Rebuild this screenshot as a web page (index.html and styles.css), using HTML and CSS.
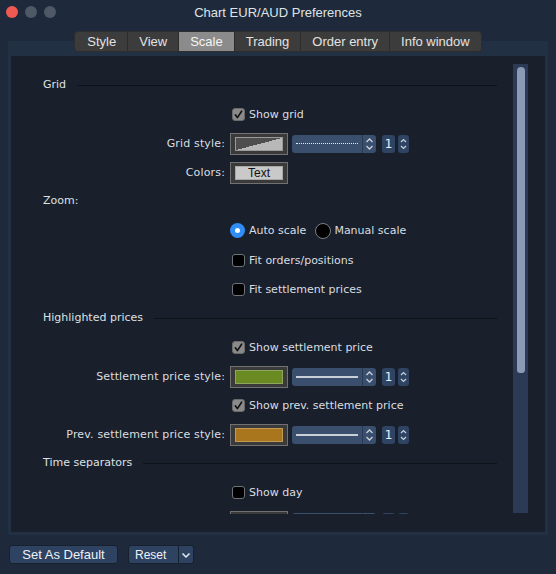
FILE: index.html
```html
<!DOCTYPE html>
<html>
<head>
<meta charset="utf-8">
<link rel="stylesheet" href="styles.css">
</head>
<body>
<div class="window">
  <div class="titlebar">
    <div class="lights">
      <span class="light red"></span><span class="light grey"></span><span class="light grey"></span>
    </div>
    <div class="title">Chart EUR/AUD Preferences</div>
    <div></div>
  </div>
  <div class="tabs-wrap">
    <div class="tabs">
      <div class="tab">Style</div>
      <div class="tab">View</div>
      <div class="tab active">Scale</div>
      <div class="tab">Trading</div>
      <div class="tab">Order entry</div>
      <div class="tab">Info window</div>
    </div>
  </div>
  <div class="panel">
    <div class="inner">
      <div class="scroll">
        <div class="content">
          <div class="header"><span>Grid</span><i class="rule"></i></div>
          <div class="row"><div class="label"></div><div class="ctrl"><span class="cb on"><svg width="13" height="13" viewBox="0 0 13 13"><path d="M3.3 6.8 L5.4 9.6 L9.6 3.2" stroke="#111" stroke-width="1.6" fill="none" stroke-linecap="round" stroke-linejoin="round"/></svg></span><span class="txt">Show grid</span></div></div>
          <div class="row"><div class="label">Grid style:</div><div class="ctrl"><span class="swbox"><span class="sw sw-grid"></span></span><span class="dd"><span class="dd-main"><i class="ln dotted"></i></span><span class="dd-step"><svg width="13" height="18" viewBox="0 0 13 18"><path d="M3.5 7 L6.5 4 L9.5 7 M3.5 11 L6.5 14 L9.5 11" stroke="#c9d1dc" stroke-width="1.3" fill="none"/></svg></span></span><span class="num">1</span><span class="step"><svg width="11" height="18" viewBox="0 0 11 18"><path d="M3 7 L5.5 4.5 L8 7 M3 11 L5.5 13.5 L8 11" stroke="#c9d1dc" stroke-width="1.2" fill="none"/></svg></span></div></div>
          <div class="row"><div class="label">Colors:</div><div class="ctrl"><span class="swbox"><span class="sw sw-text">Text</span></span></div></div>
          <div class="header"><span>Zoom:</span></div>
          <div class="row radio-row"><div class="label"></div><div class="ctrl"><span class="rb on"></span><span class="txt">Auto scale</span><span class="rb off"></span><span class="txt tight">Manual scale</span></div></div>
          <div class="row"><div class="label"></div><div class="ctrl"><span class="cb"></span><span class="txt">Fit orders/positions</span></div></div>
          <div class="row"><div class="label"></div><div class="ctrl"><span class="cb"></span><span class="txt">Fit settlement prices</span></div></div>
          <div class="header"><span>Highlighted prices</span><i class="rule"></i></div>
          <div class="row"><div class="label"></div><div class="ctrl"><span class="cb on"><svg width="13" height="13" viewBox="0 0 13 13"><path d="M3.3 6.8 L5.4 9.6 L9.6 3.2" stroke="#111" stroke-width="1.6" fill="none" stroke-linecap="round" stroke-linejoin="round"/></svg></span><span class="txt">Show settlement price</span></div></div>
          <div class="row"><div class="label">Settlement price style:</div><div class="ctrl"><span class="swbox"><span class="sw sw-green"></span></span><span class="dd"><span class="dd-main"><i class="ln solid"></i></span><span class="dd-step"><svg width="13" height="18" viewBox="0 0 13 18"><path d="M3.5 7 L6.5 4 L9.5 7 M3.5 11 L6.5 14 L9.5 11" stroke="#c9d1dc" stroke-width="1.3" fill="none"/></svg></span></span><span class="num">1</span><span class="step"><svg width="11" height="18" viewBox="0 0 11 18"><path d="M3 7 L5.5 4.5 L8 7 M3 11 L5.5 13.5 L8 11" stroke="#c9d1dc" stroke-width="1.2" fill="none"/></svg></span></div></div>
          <div class="row"><div class="label"></div><div class="ctrl"><span class="cb on"><svg width="13" height="13" viewBox="0 0 13 13"><path d="M3.3 6.8 L5.4 9.6 L9.6 3.2" stroke="#111" stroke-width="1.6" fill="none" stroke-linecap="round" stroke-linejoin="round"/></svg></span><span class="txt">Show prev. settlement price</span></div></div>
          <div class="row"><div class="label">Prev. settlement price style:</div><div class="ctrl"><span class="swbox"><span class="sw sw-orange"></span></span><span class="dd"><span class="dd-main"><i class="ln solid"></i></span><span class="dd-step"><svg width="13" height="18" viewBox="0 0 13 18"><path d="M3.5 7 L6.5 4 L9.5 7 M3.5 11 L6.5 14 L9.5 11" stroke="#c9d1dc" stroke-width="1.3" fill="none"/></svg></span></span><span class="num">1</span><span class="step"><svg width="11" height="18" viewBox="0 0 11 18"><path d="M3 7 L5.5 4.5 L8 7 M3 11 L5.5 13.5 L8 11" stroke="#c9d1dc" stroke-width="1.2" fill="none"/></svg></span></div></div>
          <div class="header"><span>Time separators</span><i class="rule"></i></div>
          <div class="row"><div class="label"></div><div class="ctrl"><span class="cb"></span><span class="txt">Show day</span></div></div>
          <div class="row"><div class="label"></div><div class="ctrl"><span class="swbox"><span class="sw sw-grey"></span></span><span class="dd"><span class="dd-main"><i class="ln solid"></i></span><span class="dd-step"></span></span><span class="num"></span><span class="step"></span></div></div>
        </div>
        <div class="track"><div class="thumb"></div></div>
      </div>
    </div>
  </div>
  <div class="footer">
    <button class="btn default">Set As Default</button>
    <div class="split">
      <button class="btn reset">Reset</button>
      <button class="btn arrow"><svg width="10" height="8" viewBox="0 0 10 8"><path d="M1.5 2.5 L5 6 L8.5 2.5" stroke="#e8edf3" stroke-width="1.5" fill="none"/></svg></button>
    </div>
  </div>
</div>
</body>
</html>
```

FILE: styles.css
```css
* { box-sizing: border-box; }
html, body { margin: 0; padding: 0; }
body {
  width: 556px;
  height: 574px;
  overflow: hidden;
  background: #1e2a3b;
  font-family: "DejaVu Sans", sans-serif;
  font-size: 11px;
  color: #d9dde2;
}
.window { width: 556px; height: 574px; display: flex; flex-direction: column; }

.titlebar {
  height: 24px;
  display: grid;
  grid-template-columns: 1fr auto 1fr;
  align-items: center;
}
.lights { display: flex; gap: 7px; padding-left: 6px; }
.light { width: 12px; height: 12px; border-radius: 50%; display: block; }
.light.red { background: #ee5a52; }
.light.grey { background: #4e5866; }
.title {
  font-family: "Liberation Sans", Arial, sans-serif;
  font-size: 13px;
  color: #dfe3e8;
}

.tabs-wrap { display: flex; justify-content: center; margin-top: 7px; position: relative; z-index: 2; }
.tabs {
  display: flex;
  height: 21px;
  background: #3c3c3c;
  border-radius: 4px;
  overflow: hidden;
  border: 1px solid #2e2e2e;
}
.tab {
  font-family: "Liberation Sans", Arial, sans-serif;
  font-size: 13px;
  color: #e2e2e2;
  padding: 0 11px;
  display: flex;
  align-items: center;
  border-left: 1px solid #2c2c2c;
}
.tab:first-child { border-left: none; padding-left: 12px; }
.tab.active { background: #8b8b8b; color: #f4f4f4; }

.panel {
  margin: -11px 8px 0 8px;
  height: 494px;
  background: #223044;
  padding: 15px 3px 3px 3px;
}
.inner {
  height: 100%;
  background: #19202b;
  padding: 8px 17px 18px 0;
}
.scroll { display: flex; height: 450px; }
.content { flex: 1; overflow: hidden; padding-top: 7px; }
.track {
  width: 15px;
  height: 449px;
  background: #2b3b55;
  padding: 3px 3px 0 4px;
}
.thumb {
  height: 306px;
  background: #8c9bb5;
  border-radius: 5px 5px 4px 4px;
}

.header {
  height: 29px;
  display: flex;
  align-items: center;
  padding: 0 16px 2px 32px;
  color: #dde1e6;
}
.rule { flex: 1; height: 1px; background: #0e131a; margin-left: 11px; margin-top: 1px; }

.row {
  height: 29px;
  display: grid;
  grid-template-columns: 214px 1fr;
  column-gap: 5px;
  align-items: center;
}
.radio-row { margin-bottom: 1px; }
.label { text-align: right; white-space: nowrap; letter-spacing: 0.15px; }
.ctrl { display: flex; align-items: center; }

.cb {
  width: 13px; height: 13px;
  margin-left: 2px;
  border-radius: 3px;
  background: #000;
  border: 1px solid #6e737a;
  display: flex;
}
.cb svg { margin: -1px; }
.cb.on { background: #8a8a8a; border-color: #6a6a6a; }
.txt { margin-left: 4px; white-space: nowrap; }
.txt.tight { margin-left: 3px; }

.rb { width: 15px; height: 15px; border-radius: 50%; display: flex; align-items: center; justify-content: center; }
.rb.on { background: #2f8df5; }
.rb.on::after { content: ""; width: 5px; height: 5px; border-radius: 50%; background: #fff; }
.rb.off { width: 16px; height: 16px; background: #000; border: 1px solid #7a7f86; margin-left: 9px; }

.swbox {
  width: 58px; height: 22px;
  border: 1px solid #717171;
  background: #3a3a3a;
  padding: 3px 4px;
  display: flex;
}
.sw { flex: 1; border: 1px solid #8a8a8a; }
.sw-grid { background: linear-gradient(to bottom right, #4e4e4e 50%, #b8b8b8 50%); border-color: #9a9a9a; }
.sw-text {
  background: #c9c9c9;
  color: #111;
  font-family: "Liberation Sans", Arial, sans-serif;
  font-size: 12px;
  text-align: center;
  line-height: 12px;
  border-color: #a8a8a8;
}
.sw-green { background: #6a8b22; border-color: #8ea560; }
.sw-orange { background: #a9761d; border-color: #c39a55; }
.sw-grey { background: #4a4a4a; }

.dd {
  margin-left: 4px;
  width: 84px; height: 18px;
  display: flex;
  background: #3a4f6d;
  border-radius: 3px;
  overflow: hidden;
}
.dd-main { flex: 1; display: flex; align-items: center; padding: 0 4px; }
.ln { flex: 1; display: block; }
.ln.dotted { border-top: 1px dotted #e4e8ee; }
.ln.solid { height: 2px; background: #c8cfd9; }
.dd-step { width: 14px; border-left: 1px solid #2a3a52; display: flex; }
.num {
  margin-left: 6px;
  width: 13px; height: 18px;
  background: #2f4462;
  border-radius: 3px;
  color: #eef1f5;
  display: flex; align-items: center; justify-content: center;
  font-size: 12px;
}
.step {
  margin-left: 3px;
  width: 11px; height: 18px;
  background: #2f4462;
  border-radius: 3px;
  display: flex;
}

.footer {
  display: flex;
  align-items: center;
  gap: 10px;
  padding: 10px 0 0 9px;
}
.btn {
  font-family: "Liberation Sans", Arial, sans-serif;
  color: #eef2f6;
  background: #2e4262;
  border: 1px solid #17202d;
  border-radius: 3px;
  height: 19px;
  padding: 0;
  margin: 0;
}
.btn.default { width: 109px; font-size: 13px; }
.split { display: flex; }
.btn.reset { width: 51px; font-size: 12px; text-align: left; padding-left: 6px; border-radius: 3px 0 0 3px; }
.btn.arrow { width: 15px; border-left: none; border-radius: 0 3px 3px 0; display: flex; align-items: center; justify-content: center; }
```
